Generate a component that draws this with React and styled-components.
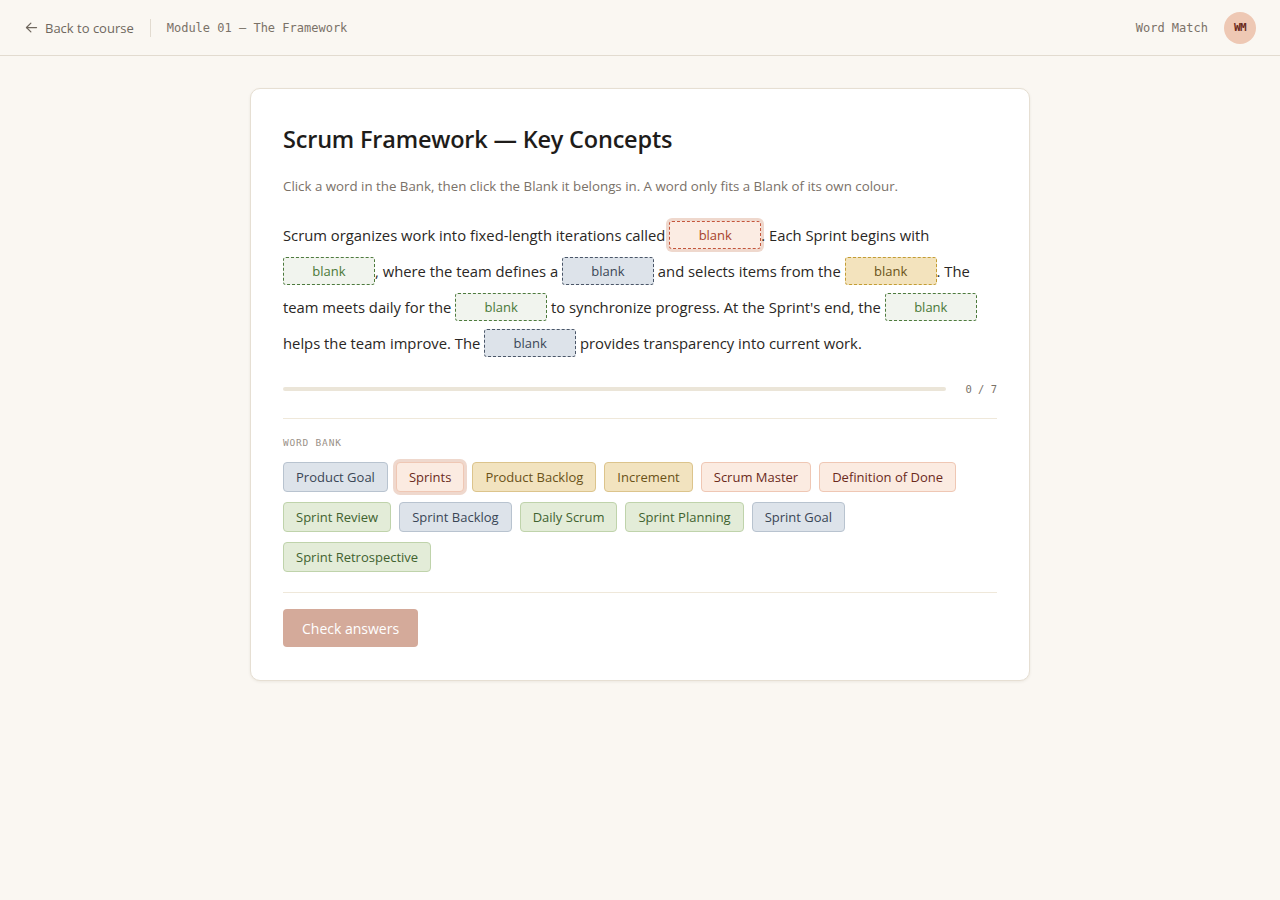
import React, { useState } from "react";
import styled, { createGlobalStyle, css } from "styled-components";

const GlobalStyle = createGlobalStyle`
  html, body {
    margin: 0;
    padding: 0;
    background: #faf7f2;
  }
  body {
    font-family: "Open Sans", "Liberation Sans", sans-serif;
    color: #222;
  }
  * {
    box-sizing: border-box;
  }
`;

const mono = `"DejaVu Sans Mono", "Liberation Mono", monospace`;

const tones = {
  red: {
    bg: "#fbebe1",
    border: "#efc7b4",
    text: "#6b2a1c",
    dash: "#c4563c",
    blankText: "#a8432c",
    blankBg: "#fbece3",
  },
  green: {
    bg: "#e3ecd8",
    border: "#bfd3ab",
    text: "#41622f",
    dash: "#4d7a3d",
    blankText: "#4a7838",
    blankBg: "#f1f4ee",
  },
  blue: {
    bg: "#dde3ea",
    border: "#b8c3cf",
    text: "#3a4656",
    dash: "#4a5668",
    blankText: "#3a4656",
    blankBg: "#dde3ea",
  },
  yellow: {
    bg: "#f2e3bf",
    border: "#dcc48c",
    text: "#6a5218",
    dash: "#c39d34",
    blankText: "#6a5218",
    blankBg: "#f3e3bd",
  },
};

const Page = styled.div`
  min-height: 100vh;
  background: #faf7f2;
`;

const TopBar = styled.header`
  height: 56px;
  border-bottom: 1px solid #e2dbd0;
  display: flex;
  align-items: center;
  justify-content: space-between;
  padding: 0 24px;
`;

const TopLeft = styled.div`
  display: flex;
  align-items: center;
`;

const BackLink = styled.a`
  display: flex;
  align-items: center;
  gap: 6px;
  font-size: 13px;
  color: #6f675e;
  text-decoration: none;
  cursor: pointer;
`;

const VDivider = styled.span`
  width: 1px;
  height: 18px;
  background: #e2dbd0;
  margin: 0 16px;
`;

const MonoLabel = styled.span`
  font-family: ${mono};
  font-size: ${({ size }) => size || 11}px;
  color: ${({ color }) => color || "#7a7268"};
`;

const TopRight = styled.div`
  display: flex;
  align-items: center;
  gap: 16px;
`;

const Avatar = styled.div`
  width: 32px;
  height: 32px;
  border-radius: 50%;
  background: #eec8b4;
  color: #6b2a1c;
  display: flex;
  align-items: center;
  justify-content: center;
  font-family: ${mono};
  font-weight: 700;
  font-size: 11px;
  letter-spacing: -0.5px;
`;

const Main = styled.main`
  display: flex;
  justify-content: center;
  padding-top: 32px;
`;

const Card = styled.section`
  width: 780px;
  background: #fff;
  border: 1px solid #e6dfd3;
  border-radius: 10px;
  box-shadow: 0 1px 3px rgba(60, 45, 30, 0.08);
  padding: 32px 32px 33px;
`;

const Title = styled.h1`
  margin: 0;
  font-size: 23.5px;
  font-weight: 600;
  color: #1e1c1a;
  letter-spacing: -0.2px;
  line-height: 36px;
`;

const Hint = styled.p`
  margin: 19px 0 0;
  font-size: 13.3px;
  color: #7a7168;
  line-height: 20px;
`;

const Passage = styled.p`
  margin: 21px 0 0;
  font-size: 14.8px;
  line-height: 36px;
  color: #2a2724;
`;

const Blank = styled.span`
  display: inline-flex;
  align-items: center;
  justify-content: center;
  width: 92px;
  height: 28px;
  vertical-align: middle;
  margin-top: -4px;
  border-radius: 3px;
  font-size: 13px;
  line-height: 1;
  border: 1px dashed ${({ tone }) => tones[tone].dash};
  background: ${({ tone }) => tones[tone].blankBg};
  color: ${({ tone }) => tones[tone].blankText};
  cursor: pointer;
  ${({ active }) =>
    active &&
    css`
      box-shadow: 0 0 0 3px #efd8cd;
    `}
`;

const ProgressRow = styled.div`
  display: flex;
  align-items: center;
  gap: 19px;
  margin-top: 22px;
`;

const Track = styled.div`
  flex: 1;
  height: 4px;
  border-radius: 2px;
  background: #ebe5d8;
`;

const Rule = styled.hr`
  border: none;
  border-top: 1px solid #efe8da;
  margin: ${({ gap }) => gap || "23px 0 0"};
`;

const BankLabel = styled.div`
  margin-top: 18px;
  font-family: ${mono};
  font-size: 9.5px;
  letter-spacing: 0.8px;
  color: #9a9188;
`;

const Bank = styled.div`
  display: flex;
  flex-wrap: wrap;
  gap: 10px 8px;
  margin-top: 14px;
`;

const Chip = styled.button`
  height: 30px;
  padding: 0 12px;
  border-radius: 4px;
  font-family: "Open Sans", "Liberation Sans", sans-serif;
  font-size: 13px;
  border: 1px solid ${({ tone }) => tones[tone].border};
  background: ${({ tone }) => tones[tone].bg};
  color: ${({ tone }) => tones[tone].text};
  cursor: pointer;
  ${({ active }) =>
    active &&
    css`
      box-shadow: 0 0 0 3px #efd8cd;
    `}
`;

const CheckButton = styled.button`
  margin-top: 16px;
  height: 38px;
  padding: 0 19px;
  border: none;
  border-radius: 4px;
  background: #d4aa9a;
  color: #fff;
  font-family: "Open Sans", "Liberation Sans", sans-serif;
  font-size: 14px;
  cursor: pointer;
`;

const words = [
  ["Product Goal", "blue"],
  ["Sprints", "red"],
  ["Product Backlog", "yellow"],
  ["Increment", "yellow"],
  ["Scrum Master", "red"],
  ["Definition of Done", "red"],
  ["Sprint Review", "green"],
  ["Sprint Backlog", "blue"],
  ["Daily Scrum", "green"],
  ["Sprint Planning", "green"],
  ["Sprint Goal", "blue"],
  ["Sprint Retrospective", "green"],
];

function ArrowLeft() {
  return (
    <svg width="15" height="15" viewBox="0 0 24 24" fill="none" stroke="currentColor" strokeWidth="2" strokeLinecap="round" strokeLinejoin="round">
      <path d="M20 12H4" />
      <path d="M11 19l-7-7 7-7" />
    </svg>
  );
}

export default function App() {
  const [selected, setSelected] = useState("Sprints");

  return (
    <Page>
      <GlobalStyle />
      <TopBar>
        <TopLeft>
          <BackLink>
            <ArrowLeft />
            Back to course
          </BackLink>
          <VDivider />
          <MonoLabel size={12}>Module 01 — The Framework</MonoLabel>
        </TopLeft>
        <TopRight>
          <MonoLabel size={12}>Word Match</MonoLabel>
          <Avatar>WM</Avatar>
        </TopRight>
      </TopBar>
      <Main>
        <Card>
          <Title>Scrum Framework — Key Concepts</Title>
          <Hint>
            Click a word in the Bank, then click the Blank it belongs in. A word only fits a Blank of its own colour.
          </Hint>
          <Passage>
            Scrum organizes work into fixed-length iterations called{" "}
            <Blank tone="red" active>blank</Blank>. Each Sprint begins with{" "}
            <Blank tone="green">blank</Blank>, where the team defines a{" "}
            <Blank tone="blue">blank</Blank> and selects items from the{" "}
            <Blank tone="yellow">blank</Blank>. The team meets daily for the{" "}
            <Blank tone="green">blank</Blank> to synchronize progress. At the Sprint's end, the{" "}
            <Blank tone="green">blank</Blank> helps the team improve. The{" "}
            <Blank tone="blue">blank</Blank> provides transparency into current work.
          </Passage>
          <ProgressRow>
            <Track />
            <MonoLabel size={10.5}>0 / 7</MonoLabel>
          </ProgressRow>
          <Rule />
          <BankLabel>WORD BANK</BankLabel>
          <Bank>
            {words.map(([w, tone]) => (
              <Chip
                key={w}
                tone={tone}
                active={selected === w}
                onClick={() => setSelected(w)}
              >
                {w}
              </Chip>
            ))}
          </Bank>
          <Rule gap="20px 0 0" />
          <CheckButton>Check answers</CheckButton>
        </Card>
      </Main>
    </Page>
  );
}
